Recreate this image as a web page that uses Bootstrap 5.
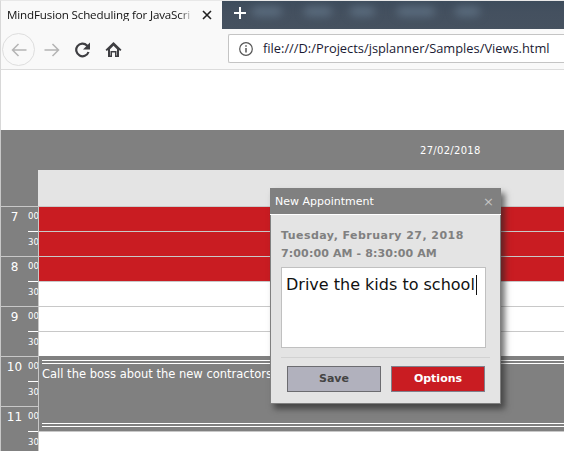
<!DOCTYPE html>
<html><head><meta charset="utf-8">
<link href="https://cdn.jsdelivr.net/npm/bootstrap@5.3.0/dist/css/bootstrap.min.css" rel="stylesheet">
<style>
html,body{height:451px;overflow:hidden;background:#fff}
body{font-family:"DejaVu Sans",sans-serif;position:relative;width:564px}
.tabstrip{height:29px;background:#f9f9f9;border-top:1px solid #e8e8e8;border-left:1px solid #d8d8d8}
.tabactive{width:221px;font:11.6px/1 "Open Sans",sans-serif;letter-spacing:-.15px;color:#111;padding-left:6px;background:#f9f9f9;flex:none}
.tabtitle{width:187px;white-space:nowrap;color:#111;-webkit-mask-image:linear-gradient(90deg,#000 172px,transparent 187px);mask-image:linear-gradient(90deg,#000 172px,transparent 187px)}
.darkstrip{background:linear-gradient(#3d4c5c,#44505f 40%,#465260);overflow:hidden;padding-left:11px;gap:0}
.blob{height:9px;background:#5c6e80;border-radius:5px;filter:blur(4px);margin-top:-8px;flex:none}
.toolstrip{height:41px;background:#f9f9f9;border-bottom:1px solid #dcdcdc;border-left:1px solid #d8d8d8;padding-top:5px}
.navround{width:33px;height:33px;border:1px solid #dedede;border-radius:50%;margin-left:1px;margin-top:-1px}
.urlbox{margin-left:106px;width:340px;height:29px;background:#fff;border:1px solid #c4c4c4;border-right:0;border-radius:2px 0 0 2px;font:12.85px/1 "Open Sans",sans-serif;color:#1a1a33;padding-left:9px;gap:9px;white-space:nowrap;flex:none}
.blankband{height:60px;background:#fff;border-left:1px solid #d8d8d8}
.planner{border-left:1px solid #c8c8c8;height:321px;background:#fff}
.datehead{height:40px;background:#808080;color:#fff;font-size:10px;letter-spacing:.3px;padding-left:419px;padding-top:15px;line-height:12px}
.railcol{width:37px;background:#808080;flex:none}
.railgap{height:36px}
.slotrail{height:25px;color:#fff}
.railhour{border-top:1px solid #c8c8c8}
.hrlabel{width:27px;text-align:center;font-size:12px;line-height:14px;padding-top:3px;flex:none}
.minlabel{width:10px;font:9.5px/12px "DejaVu Sans Condensed","DejaVu Sans",sans-serif;padding-top:3px;flex:none;white-space:nowrap}
.railhalf{padding-left:27px}
.railhalf .halfwrap{border-top:1px solid #fff;height:25px;width:10px}
.railhalf .minlabel{padding-top:4px}
.maincol{min-width:0;flex:1;border-left:1px solid #c8c8c8}
.subhead{height:36px;background:#e4e4e4;margin-left:-1px}
.cellrow{height:25px;border-top:1px solid #c8c8c8;background:#fff}
.cellred{background:#c91c22}
.evblock{height:75px;background:#808080;padding-left:3px;padding-top:4px;color:#fff;font-size:11.5px;line-height:14px;white-space:nowrap;overflow:hidden}
.evline{height:4px;border-top:1px solid #fff;border-bottom:1px solid #fff}
.evtext{height:59px;padding-top:3px}
.apptdialog{position:absolute;left:270px;top:188px;width:231px;height:216px;background:#e4e4e4;border:1px solid #808080;border-top:0;box-shadow:4px 5px 6px rgba(40,40,40,.65)}
.dlghead{height:27px;background:#808080;border-bottom:1px solid #fff;color:#fff;font-size:11px;line-height:27px;padding:0 7px 0 5px;margin:0 -1px}
.dlgclose{color:#c4c4c4;font-size:13px}
.dlgbody{padding:12px 10px 0}
.dlgdate{color:#808080;font-size:11px;font-weight:700;line-height:18px}
.dateone{letter-spacing:.46px}
.datetwo{letter-spacing:.13px}
.dlgtext{height:81px;margin-top:4px;width:205px;background:#fff;border:1px solid #c0c0c0;font-size:16px;line-height:20px;color:#111;padding:7px 4px 5px;white-space:nowrap}
.caret{border-left:1px solid #111;display:inline-block;height:20px;vertical-align:top;margin-left:1px}
.dlgsep{border-top:1px solid #d2d2d2;margin:9px 0 0;width:209px}
.actbtn{width:94px;height:26px;font-size:11px;font-weight:700;line-height:24px;text-align:center;border-radius:0;padding:0}
.actsave{background:#b1b1bd;border:1px solid #6c6c70;color:#444}
.actopt{background:#c91c22;border:1px solid #80808c;color:#fff}
.actrow{gap:10px;padding:8px 0 0 6px}
.plusicon{margin-top:-4px;flex:none}
.gapa{margin-left:5px}.gapb{margin-left:22px}.gapc{margin-left:18px}.gapd{margin-left:22px}.gape{margin-left:20px}
.icfwd{margin:8px 0 0 9px;flex:none}
.icrel{margin:7px 0 0 14px;flex:none}
.ichome{margin:7px 0 0 14px;flex:none}
.icnav{flex:none}
</style></head>
<body>
<div class="tabstrip d-flex">
  <div class="tabactive d-flex align-items-center">
    <span class="tabtitle">MindFusion Scheduling for JavaScri</span>
    <svg width="10" height="10" viewBox="0 0 10 10" class="ms-2"><path d="M1 1l8 8M9 1l-8 8" stroke="#222" stroke-width="1.6" fill="none"/></svg>
  </div>
  <div class="darkstrip flex-grow-1 d-flex align-items-center">
    <svg width="14" height="14" viewBox="0 0 14 14" class="plusicon"><path d="M7 1v12M1 7h12" stroke="#fff" stroke-width="2"/></svg>
    <span class="blob gapa" style="width:30px"></span><span class="blob gapb" style="width:28px"></span><span class="blob gapc" style="width:25px"></span><span class="blob gapd" style="width:38px"></span><span class="blob gape" style="width:25px"></span>
  </div>
</div>
<div class="toolstrip d-flex align-items-start">
  <div class="navround d-flex align-items-center justify-content-center icnav">
    <svg width="16" height="16" viewBox="0 0 16 16"><path d="M15.500 8H1.500M7.500 2L1.500 8l6 6" stroke="#b4b4b4" stroke-width="1.500" fill="none"/></svg>
  </div>
  <svg width="16" height="16" viewBox="0 0 16 16" class="icfwd"><path d="M0.500 8h14M8.500 2l6 6-6 6" stroke="#b4b4b4" stroke-width="1.500" fill="none"/></svg>
  <svg width="17" height="17" viewBox="0 0 17 17" class="icrel"><path d="M14.500 11A6.300 6.300 0 1 1 13 4.500L14.500 6" stroke="#3e3e42" stroke-width="2.200" fill="none"/><path d="M16 1.500v7H9z" fill="#3e3e42"/></svg>
  <svg width="17" height="17" viewBox="0 0 17 17" class="ichome"><path d="M8.500 1L0.500 8.800l1.300 1.300L3 9v7h4v-4.500h3V16h4V9l1.200 1.100 1.300-1.300z" fill="#3e3e42"/><path d="M5 8.200L8.500 4.800 12 8.200V14.500h-.5V10h-6v4.500H5z" fill="#f9f9f9"/></svg>
  <div class="urlbox d-flex align-items-center">
    <svg width="16" height="16" viewBox="0 0 16 16" class="icnav"><circle cx="8" cy="8" r="6.300" stroke="#555" stroke-width="1.200" fill="none"/><path d="M8 7v4.500M8 4.200v1.600" stroke="#555" stroke-width="1.500"/></svg>
    <span>file:///D:/Projects/jsplanner/Samples/Views.html</span>
  </div>
</div>
<div class="blankband"></div>
<div class="planner">
  <div class="datehead">27/02/2018</div>
  <div class="d-flex">
    <div class="railcol">
      <div class="railgap"></div>
      <div class="slotrail railhour d-flex"><span class="hrlabel">7</span><span class="minlabel">00</span></div>
      <div class="slotrail railhalf"><div class="halfwrap"><div class="minlabel">30</div></div></div>
      <div class="slotrail railhour d-flex"><span class="hrlabel">8</span><span class="minlabel">00</span></div>
      <div class="slotrail railhalf"><div class="halfwrap"><div class="minlabel">30</div></div></div>
      <div class="slotrail railhour d-flex"><span class="hrlabel">9</span><span class="minlabel">00</span></div>
      <div class="slotrail railhalf"><div class="halfwrap"><div class="minlabel">30</div></div></div>
      <div class="slotrail railhour d-flex"><span class="hrlabel">10</span><span class="minlabel">00</span></div>
      <div class="slotrail railhalf"><div class="halfwrap"><div class="minlabel">30</div></div></div>
      <div class="slotrail railhour d-flex"><span class="hrlabel">11</span><span class="minlabel">00</span></div>
      <div class="slotrail railhalf"><div class="halfwrap"><div class="minlabel">30</div></div></div>
    </div>
    <div class="maincol">
      <div class="subhead"></div>
      <div class="cellrow cellred"></div><div class="cellrow cellred"></div><div class="cellrow cellred"></div>
      <div class="cellrow"></div><div class="cellrow"></div><div class="cellrow"></div>
      <div class="evblock">
        <div class="evline"></div>
        <div class="evtext">Call the boss about the new contractors</div>
        <div class="evline"></div>
      </div>
      <div class="cellrow"></div>
    </div>
  </div>
</div>
<div class="apptdialog">
  <div class="dlghead d-flex justify-content-between"><span>New Appointment</span><span class="dlgclose">×</span></div>
  <div class="dlgbody">
    <div class="dlgdate"><span class="dateone">Tuesday, February 27, 2018</span><br><span class="datetwo">7:00:00 AM - 8:30:00 AM</span></div>
    <div class="dlgtext">Drive the kids to school<span class="caret"></span></div>
    <div class="dlgsep"></div>
    <div class="actrow d-flex"><button type="button" class="btn actbtn actsave">Save</button><button type="button" class="btn actbtn actopt">Options</button></div>
  </div>
</div>
</body></html>
